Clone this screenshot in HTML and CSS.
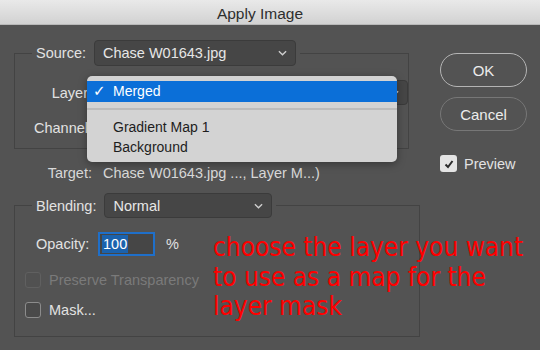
FILE: index.html
```html
<!DOCTYPE html>
<html lang="en">
<head>
    <meta charset="UTF-8">
    <meta name="viewport" content="width=device-width, initial-scale=1.0">
    <title>Apply Image</title>
    <link rel="stylesheet" href="styles.css">
</head>
<body>
    <div class="dialog">
        <div class="titlebar">Apply Image</div>
        <div class="content">
            <div class="main">
                <fieldset class="group group-source">
                    <legend>
                        <span class="lbl">Source:</span>
                        <div class="select w-source">Chase W01643.jpg
                            <svg class="chev" viewBox="0 0 10 6"><polyline points="1,1 5,5 9,1"/></svg>
                        </div>
                    </legend>
                    <div class="row">
                        <span class="row-label">Layer</span>
                        <div class="select w-layer">
                            <svg class="chev" viewBox="0 0 10 6"><polyline points="1,1 5,5 9,1"/></svg>
                        </div>
                    </div>
                    <div class="row">
                        <span class="row-label">Channel</span>
                        <div class="select w-channel"></div>
                    </div>
                </fieldset>

                <div class="target">
                    <span class="target-label">Target:</span>
                    <span>Chase W01643.jpg ..., Layer M...)</span>
                </div>

                <fieldset class="group group-blend">
                    <legend>
                        <span class="lbl">Blending:</span>
                        <div class="select w-blend">Normal
                            <svg class="chev" viewBox="0 0 10 6"><polyline points="1,1 5,5 9,1"/></svg>
                        </div>
                    </legend>
                    <div class="opacity-row">
                        <span class="opacity-label">Opacity:</span>
                        <div class="num-input"><span class="sel">100</span></div>
                        <span class="pct">%</span>
                    </div>
                    <div class="check-row disabled">
                        <span class="box"></span>
                        <span>Preserve Transparency</span>
                    </div>
                    <div class="check-row mask">
                        <span class="box"></span>
                        <span>Mask...</span>
                    </div>
                </fieldset>
            </div>

            <div class="side">
                <button class="btn btn-ok">OK</button>
                <button class="btn btn-cancel">Cancel</button>
                <div class="preview">
                    <span class="box checked">
                        <svg viewBox="0 0 12 12"><polyline points="2.5,6.5 5,9 9.5,3"/></svg>
                    </span>
                    <span>Preview</span>
                </div>
            </div>
        </div>

        <div class="menu">
            <div class="menu-item active"><span class="tick">&#10003;</span>Merged</div>
            <div class="menu-sep"></div>
            <div class="menu-item">Gradient Map 1</div>
            <div class="menu-item">Background</div>
        </div>

        <p class="note">choose the layer you want<br>to use as a map for the<br>layer mask</p>
    </div>
</body>
</html>
```

FILE: styles.css
```css
body {
    margin: 0;
    background-color: #535353;
    font-family: "Liberation Sans", Arial, sans-serif;
    font-size: 14.5px;
    color: #e2e2e2;
}
.dialog {
    position: relative;
    width: 540px;
    height: 350px;
    overflow: hidden;
    background: #535353;
}
.titlebar {
    height: 25px;
    line-height: 27px;
    padding-right: 20px;
    text-align: center;
    font-size: 15.5px;
    color: #2e2e2e;
    background: linear-gradient(#e9e9e9, #d2d2d2);
    border-bottom: 1px solid #b9b9b9;
    box-sizing: border-box;
}
.content {
    display: flex;
    padding: 15px 0 0 14px;
    gap: 20px;
}
.main {
    width: 406px;
}

/* fieldsets */
.group {
    margin: 0;
    border: 1px solid #434343;
    padding: 14px 0 8px 17px;
    box-sizing: border-box;
}
.group legend {
    display: flex;
    align-items: center;
    padding: 0 4px;
}
.group-source {
    width: 393px;
}
.group-blend {
    width: 406px;
    margin-top: 10px;
    padding-bottom: 16px;
}
.lbl {
    margin-right: 8px;
}

.select {
    position: relative;
    box-sizing: border-box;
    height: 26px;
    line-height: 24px;
    padding-left: 8px;
    background: #464646;
    border: 1px solid #3b3b3b;
    border-radius: 4px;
    color: #e6e6e6;
}
.chev {
    position: absolute;
    right: 8px;
    top: 9px;
    width: 9px;
    height: 6px;
    fill: none;
    stroke: #cfcfcf;
    stroke-width: 1.5;
}
.w-source { width: 202px; }
.w-layer { width: 314px; height: 25px; }
.w-channel { width: 300px; height: 25px; }
.w-blend { width: 168px; height: 25px; }

.row {
    display: flex;
    align-items: center;
    gap: 4px;
    margin-bottom: 10px;
}
.row:last-child {
    margin-bottom: 0;
}
.row-label {
    box-sizing: border-box;
    width: 58px;
    padding-right: 2px;
    text-align: right;
    white-space: nowrap;
}

.target {
    display: flex;
    align-items: center;
    height: 20px;
    margin-top: 14px;
    color: #d8d8d8;
}
.target-label {
    width: 78px;
    text-align: right;
    margin-right: 11px;
}

.opacity-row {
    display: flex;
    align-items: center;
    padding-left: 4px;
    height: 24px;
}
.opacity-label {
    width: 62px;
}
.num-input {
    box-sizing: border-box;
    width: 57px;
    height: 24px;
    border: 2px solid #1f6fc9;
    background: #464646;
    padding: 1px 2px;
}
.num-input .sel {
    display: inline-block;
    background: #1b62ad;
    color: #fff;
    line-height: 18px;
    padding: 0 1px;
}
.pct {
    margin-left: 11px;
}

.check-row {
    display: flex;
    align-items: center;
    gap: 8px;
    height: 20px;
    margin-left: -7px;
}
.check-row.disabled {
    margin-top: 14px;
    color: #7a7a7a;
}
.check-row.mask {
    margin-top: 10px;
}
.box {
    box-sizing: border-box;
    width: 16px;
    height: 16px;
    border-radius: 3px;
    border: 1px solid #8c8c8c;
    background: #4a4a4a;
}
.disabled .box {
    border-color: #606060;
    background: #515151;
}

/* right column */
.side {
    display: flex;
    flex-direction: column;
    align-items: flex-start;
}
.btn {
    width: 87px;
    height: 34px;
    border-radius: 17px;
    background: transparent;
    color: #ececec;
    font-family: inherit;
    font-size: 15px;
    padding: 0;
}
.btn-ok {
    margin-top: 13px;
    border: 1px solid #b4b4b4;
}
.btn-cancel {
    margin-top: 10px;
    border: 1px solid #777;
}
.preview {
    display: flex;
    align-items: center;
    gap: 7px;
    margin-top: 24px;
}
.box.checked {
    width: 17px;
    height: 17px;
    border: none;
    background: #e4e4e4;
    display: flex;
    align-items: center;
    justify-content: center;
}
.box.checked svg {
    width: 12px;
    height: 12px;
    fill: none;
    stroke: #2b2b2b;
    stroke-width: 2;
}

/* popup menu */
.menu {
    position: absolute;
    left: 87px;
    top: 76px;
    width: 310px;
    box-sizing: border-box;
    padding: 5px 0;
    background: #d3d3d3;
    border-radius: 5px;
    box-shadow: 0 2px 8px rgba(0, 0, 0, 0.35);
    color: #1d1d1d;
    font-size: 14px;
}
.menu-item {
    position: relative;
    height: 20px;
    line-height: 20px;
    padding-left: 26px;
}
.menu-item.active {
    height: 21px;
    line-height: 21px;
    background: #0b6fd8;
    color: #fff;
}
.tick {
    position: absolute;
    left: 6px;
    font-family: "DejaVu Sans", sans-serif;
    font-size: 15px;
    font-weight: bold;
}
.menu-sep {
    height: 2px;
    margin: 6px 0 7px;
    background: #bcbcbc;
}

/* annotation */
.note {
    position: absolute;
    left: 213px;
    top: 233px;
    margin: 0;
    font-family: "DejaVu Sans Condensed", "DejaVu Sans", sans-serif;
    font-size: 26px;
    line-height: 29.5px;
    color: #ff0000;
    white-space: nowrap;
}
```
